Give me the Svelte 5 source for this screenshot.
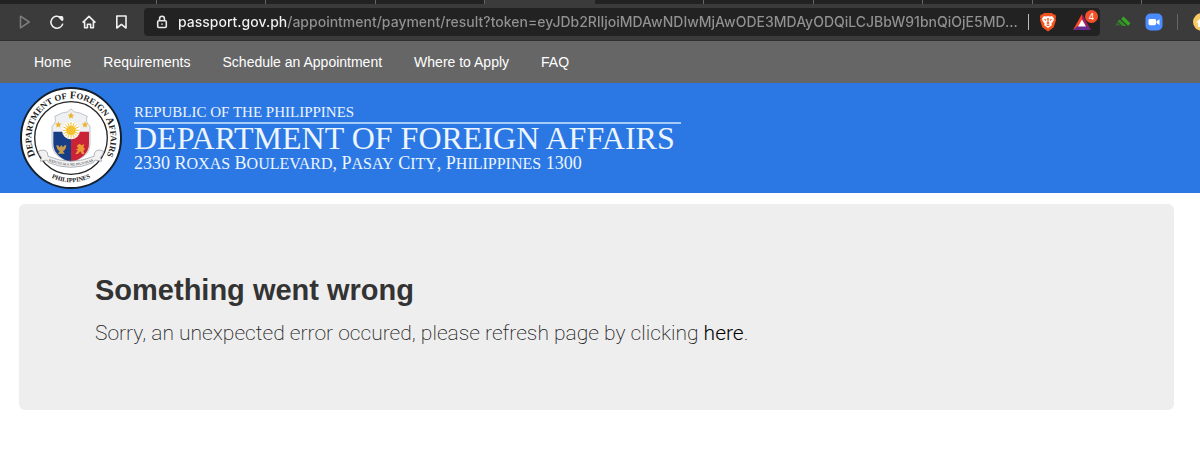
<script>
  const tabs = [0, 1, 2, 3, 4, 5, 6, 7, 8, 9, 10];
  const links = ['Home', 'Requirements', 'Schedule an Appointment', 'Where to Apply', 'FAQ'];
  let address = $state(
    'passport.gov.ph/appointment/payment/result?token=eyJDb2RlIjoiMDAwNDIwMjAwODE3MDAyODQiLCJBbW91bnQiOjE5MD...'
  );
</script>

<div class="browser">
  <div class="tabs">
    {#each tabs as tab}
      <span class="tab" class:active={tab === 4}></span>
    {/each}
  </div>
  <div class="toolbar">
    <div class="tools">
      <button class="dim" aria-label="Forward">
        <svg width="18" height="18" viewBox="0 0 18 18"><path d="M4.500 3.200 13.200 9 4.500 14.800Z" /></svg>
      </button>
      <button aria-label="Reload">
        <svg width="18" height="18" viewBox="0 0 18 18"><path d="M12.800 4.600A6 6 0 1 0 14.800 10.600" /><path class="solid" d="M10.400 4.400q0-1.300 1.600-1.300h1.600q1.800 0 1.800 1.800v1.700q0 1.600-1.500 1.400Z" /></svg>
      </button>
      <button aria-label="Home page">
        <svg width="18" height="18" viewBox="0 0 18 18"><path d="M2.600 9.600 9 3.400l6.400 6.200M4.600 8.600v6.200h2.800v-3.600h3.200v3.600h2.800V8.600" /></svg>
      </button>
      <button aria-label="Bookmark">
        <svg width="18" height="18" viewBox="0 0 18 18"><path d="M4.800 3h9.200v12L9.400 11.400 4.800 15Z" /></svg>
      </button>
    </div>
    <div class="address">
      <svg class="lock" width="12" height="14" viewBox="0 0 12 14"><rect x="1.700" y="5.700" width="8.600" height="6.800" rx="1" /><path d="M3.600 5.500V3.600a2.400 2.400 0 0 1 4.800 0v1.900M6 8.400v1.400" /></svg>
      <input aria-label="Address" type="text" bind:value={address} spellcheck="false" />
      <span class="rule light"></span>
      <button class="brave" aria-label="Shields">
        <svg width="18" height="20" viewBox="0 0 18 20">
          <path fill="#f4521e" d="M5 1h8l1.600 1.600 1.500-.2 1 2.200-.6 1.600.5 1.700-2.300 7.400L9 19.400l-5.700-4.100L1 7.900l.5-1.700-.6-1.600 1-2.200 1.500.2Z" />
          <path fill="#fff" d="m5 3.900 2.200.5L9 4l1.800.4 2.200-.5 2 2.700-.6 2.500-1.900 2.500.3 1.700L9 15.900l-3.800-2.600.3-1.700-1.900-2.500L3 6.600Z" />
          <path fill="#f4521e" d="m4.600 7.100 2.800.4-.6 1.400Zm8.800 0-2.800.4.6 1.400ZM8.200 6h1.600l-.3 4 1.300 1L9 12.200 7.200 11l1.300-1ZM6.800 12.900 9 12.400l2.200.5L9 14.300Z" />
        </svg>
      </button>
      <button class="rewards" aria-label="Rewards">
        <svg width="18" height="16" viewBox="0 0 18 16">
          <path fill="#ff4724" d="M9 0 0 16l9-6Z" />
          <path fill="#9e1f63" d="m9 0 9 16-9-6Z" />
          <path fill="#662d91" d="M0 16h18l-5-4H5Z" />
          <path fill="#fff" d="m9 5.500 4 7H5Z" />
        </svg>
        <span class="badge">4</span>
      </button>
    </div>
    <div class="extensions">
      <button aria-label="Green extension">
        <svg width="16" height="12" viewBox="0 0 16 12"><path fill="#37a422" d="m8.500.5 7 7-2.400 2.200-7-6.800Z" /><path fill="#2c9120" d="m4.600 3.600 7 6.400H7.300L2.500 5.600Z" /><path fill="#42613c" d="M2.300 6.300 5.600 9.500H0Z" /></svg>
      </button>
      <button aria-label="Video meeting">
        <svg width="18" height="18" viewBox="0 0 18 18"><rect width="17" height="17" x=".5" y=".5" rx="5" fill="#4a8cff" /><rect x="3.500" y="6" width="7.500" height="6.200" rx="1.400" fill="#fff" /><path fill="#fff" d="m11.500 8.200 3-2v5.800l-3-2Z" /></svg>
      </button>
      <span class="rule"></span>
      <button class="profile" aria-label="Profile">
        <svg width="20" height="20" viewBox="0 0 20 20"><circle cx="10" cy="10" r="9" fill="#f8c963" /><path fill="#fff" d="M4 10.500 10 5l6 5.500h-2V15H6v-4.500Z" /></svg>
      </button>
    </div>
  </div>
</div>

<nav>
  {#each links as link}
    <a href="#top">{link}</a>
  {/each}
</nav>

<header>
  <svg class="seal" width="102" height="102" viewBox="0 0 306 306" role="img" aria-label="Department seal">
    <defs>
      <path id="upper" d="M62 230A119 119 0 1 1 244 230" />
      <path id="lower" d="M28 198A133 133 0 0 0 278 198" />
      <path id="motto" d="M84 216Q153 246 222 216" />
      <path id="star" d="m0-10 2.900 6.200 6.700.8-4.900 4.700 1.300 6.700L0 5.200l-6 3.200 1.300-6.700-4.900-4.700 6.700-.8Z" />
    </defs>
    <circle cx="153" cy="153" r="150" fill="#fff" stroke="#15202e" stroke-width="6" />
    <circle cx="153" cy="153" r="109" fill="#fff" stroke="#252525" stroke-width="4" />
    <text class="ring" font-size="31" text-anchor="middle"><textPath href="#upper" startOffset="50%">D<tspan font-size="26">EPARTMENT</tspan>{' '}<tspan font-size="26">OF</tspan>{' '}F<tspan font-size="26">OREIGN</tspan>{' '}A<tspan font-size="26">FFAIRS</tspan></textPath></text>
    <text class="ring" font-size="19" text-anchor="middle"><textPath href="#lower" startOffset="50%">PHILIPPINES</textPath></text>
    <path d="M153 66q9 12 27 12l22 10q-8 16 8 30v54q-3 32-30 42l-27 15-27-15q-27-10-30-42v-54q16-14 8-30l22-10q18 0 27-12Z" fill="#eef0f3" stroke="#a6aab1" stroke-width="2" />
    <path d="M100 134h53v92q-53-18-53-56Z" fill="#173d87" />
    <path d="M153 134h54v36q0 38-54 56Z" fill="#ca2236" />
    <circle cx="153" cy="130" r="27" fill="#fff" />
    <path d="M153 105v50M128 130h50M135 112l36 36M171 112l-36 36M143 107l20 46M163 107l-20 46M130 120l46 20M130 140l46-20" stroke="#f0bd35" stroke-width="3" />
    <circle cx="153" cy="130" r="14" fill="#f4c22f" />
    <g fill="#e9b52f"><use href="#star" x="153" y="86" /><use href="#star" x="115" y="113" /><use href="#star" x="195" y="113" /></g>
    <path d="M109 174q7 0 10 7l5-7 5 7q3-7 10-7-1 14-10 19l5 7h-20l5-7q-9-5-10-19Z" fill="#c79a4c" />
    <path d="m170 177 8-7 7 5 8-4-3 10 5 5-5 5 3 10h-7l-5-8-8 8h-7l8-11-7-2 8-4Z" fill="#ec9a35" />
    <path d="M55 193q16-9 27 3l2 12q69 29 138 0l2-12q11-12 27-3-1 12-10 18l4 12-20-4-5 8q-67 28-134 0l-5-8-20 4 4-12q-9-6-10-18Z" fill="#f2f2f2" stroke="#8d9198" stroke-width="2" />
    <text class="motto" font-size="11" text-anchor="middle" dy="5"><textPath href="#motto" startOffset="50%">REPUBLIKA NG PILIPINAS</textPath></text>
  </svg>
  <div class="title">
    <p class="country">REPUBLIC OF THE PHILIPPINES</p>
    <p class="department">DEPARTMENT OF FOREIGN AFFAIRS</p>
    <p class="location">2330 R<span>OXAS</span> B<span>OULEVARD</span>, P<span>ASAY</span> C<span>ITY</span>, P<span>HILIPPINES</span> 1300</p>
  </div>
</header>

<main>
  <section>
    <h1>Something went wrong</h1>
    <p>Sorry, an unexpected error occured, please refresh page by clicking <a href="#top">here</a>.</p>
  </section>
</main>

<style>
  :global(body) {
    margin: 0;
    background: #fff;
    font-family: "Liberation Sans", Arial, sans-serif;
    overflow-x: hidden;
  }
  .browser {
    background: #3b3b3b;
    border-bottom: 1px solid #303030;
    overflow: hidden;
  }
  .tabs {
    display: flex;
    height: 4px;
    padding-left: 47px;
    background: #222;
    overflow: hidden;
  }
  .tab {
    flex: 0 0 9.5%;
    box-sizing: border-box;
    border-right: 1px solid #666;
  }
  .tab.active {
    background: #3b3b3b;
    border-color: #3b3b3b;
  }
  .toolbar {
    display: flex;
    align-items: center;
    height: 36px;
    padding-left: 16px;
  }
  button {
    display: block;
    padding: 0;
    border: 0;
    background: none;
    color: #f0f0f0;
  }
  svg {
    display: block;
  }
  .tools {
    display: flex;
    gap: 14px;
    width: 128px;
  }
  .tools svg,
  .lock {
    fill: none;
    stroke: currentColor;
    stroke-width: 1.6;
    stroke-linejoin: round;
  }
  .tools .solid {
    fill: currentColor;
    stroke: none;
  }
  .dim {
    color: #7c7c7c;
  }
  .address {
    display: flex;
    flex: 1;
    align-items: center;
    min-width: 0;
    height: 28px;
    padding: 0 9px 0 12px;
    border-radius: 4px;
    box-sizing: border-box;
    background: #222;
    color: #e8e8e8;
  }
  .lock {
    flex: none;
    margin-right: 10px;
  }
  input {
    flex: 1;
    min-width: 0;
    height: 24px;
    padding: 0;
    border: 0;
    outline: 0;
    font: 500 14px/24px Inter, sans-serif;
    color: transparent;
    background: linear-gradient(90deg, #f4f4f4 109px, #929292 109px);
    background-clip: text;
    -webkit-background-clip: text;
  }
  .rule {
    width: 1px;
    height: 16px;
    background: #666;
  }
  .rule.light {
    background: #bbb;
  }
  .brave {
    margin: 0 16px 0 10px;
  }
  .rewards {
    position: relative;
  }
  .badge {
    position: absolute;
    top: -4px;
    left: 12px;
    width: 13px;
    height: 13px;
    border-radius: 50%;
    background: #f4502a;
    color: #fff;
    font: 9px/13px Inter, sans-serif;
    text-align: center;
  }
  .extensions {
    display: flex;
    align-items: center;
    gap: 14px;
    margin-left: 15px;
    margin-right: -12px;
  }
  nav {
    display: flex;
    gap: 32px;
    height: 42px;
    padding-left: 34px;
    background: #666;
    font-size: 14px;
    line-height: 42px;
  }
  nav a {
    color: #fff;
    text-decoration: none;
  }
  header {
    display: flex;
    align-items: flex-start;
    gap: 12px;
    min-height: 110px;
    padding: 4px 20px 0;
    box-sizing: border-box;
    background: #2b78e4;
    color: #edf5ff;
    font-family: "Liberation Serif", "Times New Roman", serif;
  }
  .seal {
    flex: none;
  }
  .ring {
    fill: #1b1b1b;
    font-weight: bold;
  }
  .motto {
    fill: #333;
  }
  .title {
    padding-top: 16px;
  }
  .title p {
    margin: 0;
    white-space: nowrap;
  }
  .country {
    font-size: 15px;
    line-height: 18px;
    padding-bottom: 1px;
    border-bottom: 2px solid #a5cbf8;
  }
  .title .department {
    padding-right: 6px;
    font-size: 32px;
    line-height: 29px;
  }
  .location {
    font-size: 18px;
    line-height: 21px;
  }
  .location span {
    font-size: 16px;
  }
  main {
    padding: 11px 26px 46px 19px;
  }
  section {
    padding: 68px 76px 62px;
    border-radius: 6px;
    background: #eee;
    color: #333;
  }
  h1 {
    margin: 0;
    font: 600 29px/36px "Liberation Sans", Arial, sans-serif;
  }
  section p {
    margin: 10px 0 0;
    font: 200 21px/30px Roboto, sans-serif;
    color: #222;
  }
  section a {
    color: #000;
    font-weight: 300;
    text-decoration: none;
  }
</style>
